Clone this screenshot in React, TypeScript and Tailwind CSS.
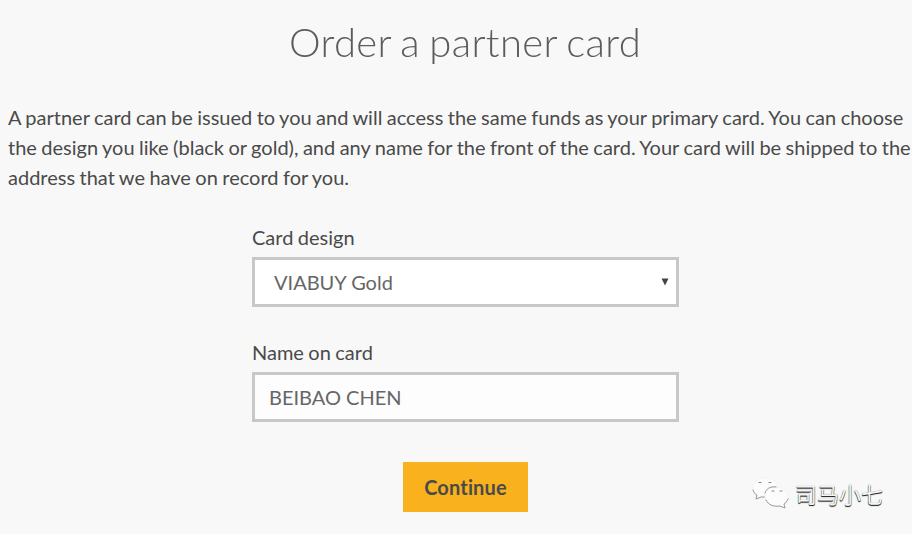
import { useState } from "react";

export default function App() {
  const [design, setDesign] = useState("gold");
  const [name, setName] = useState("BEIBAO CHEN");

  return (
    <div className="relative h-[534px] w-[912px] overflow-hidden bg-[#f8f8f8] pl-2 font-['Lato',sans-serif] text-[20px] leading-[30px] text-[#4a4a4a] [font-variant-ligatures:none] [word-spacing:-0.68px]">
      <h1 className="w-[914px] pt-[17px] text-center text-[40px] font-extralight leading-[50px] tracking-[0.35px] text-[#5c5c5c] will-change-transform [font-family:'Lato_Light','Lato',sans-serif] [word-spacing:-2px]">
        Order a partner card
      </h1>

      <p className="mt-[35px] w-[908px]">
        A partner card can be issued to you and will access the same funds as your primary card. You can choose
        the design you like (black or gold), and any name for the front of the card. Your card will be shipped to the
        address that we have on record for you.
      </p>

      <form
        className="ml-[244px] mt-[30px] flex w-[427px] flex-col"
        onSubmit={(event) => event.preventDefault()}
      >
        <label htmlFor="design">Card design</label>
        <div className="relative mt-[5px]">
          <select
            id="design"
            className="block h-[50px] w-full appearance-none border-[3px] border-[#c8c8c8] bg-white px-[19px] text-[#666] outline-none"
            value={design}
            onChange={(event) => setDesign(event.target.value)}
          >
            <option value="gold">VIABUY Gold</option>
            <option value="black">VIABUY Black</option>
          </select>
          <SelectArrow />
        </div>

        <label htmlFor="name" className="mt-[30px]">
          Name on card
        </label>
        <input
          id="name"
          type="text"
          className="mt-[5px] h-[50px] w-full border-[3px] border-[#c8c8c8] bg-[#fdfdfd] px-[14px] text-[#666] outline-none"
          value={name}
          onChange={(event) => setName(event.target.value)}
        />

        <button
          type="submit"
          className="mt-[40px] h-[50px] w-[125px] self-center bg-[#f9b21d] font-bold tracking-[0.15px] text-[#4a4a4a]"
        >
          Continue
        </button>
      </form>

      <Watermark />
    </div>
  );
}

function SelectArrow() {
  return (
    <svg
      className="pointer-events-none absolute right-[10px] top-[21px] h-[8px] w-[8px]"
      viewBox="0 0 8 8"
      fill="#444"
    >
      <path d="M0.5 0.5h7L4 7.5z" />
    </svg>
  );
}

function Watermark() {
  return (
    <div className="absolute left-[751px] top-[473px] flex items-center">
      <svg className="mt-[3px] h-[36px] w-[40px]" viewBox="0 0 40 36" fill="none" strokeLinecap="round">
        <path
          d="M2 12c0-6 5-10 12-10s12 3 13 8c-8 0-14 4-14 11l-3 0-5 3 1-5c-3-2-4-4-4-7z"
          fill="#fcfcfc"
          stroke="#efefef"
          strokeWidth="0.7"
        />
        <path d="M2 14c1 3 2 4 4 5l-1 4 5-2h4" stroke="#999" strokeWidth="1" />
        <path
          d="M14 20c0-6 5-9 11-9s12 4 12 10c0 3-2 5-4 7l1 4-5-2c-8 2-15-3-15-10z"
          fill="#fcfcfc"
          stroke="#efefef"
          strokeWidth="0.7"
        />
        <path d="M14 17c1-4 5-7 11-6M15 24c2 5 8 7 14 6l5 2-1-4c2-1 3-3 4-5" stroke="#999" strokeWidth="1" />
        <path d="M8 6.500h2M18 6.500h2M21 15h2M29 15h2" stroke="#888" strokeWidth="1.200" />
      </svg>
      <span className="ml-[4px] font-['Noto_Sans_CJK_SC',sans-serif] text-[22px] leading-[30px] text-[#f4f4f4] [text-shadow:0_1px_1px_#222,0_1px_0_#777,0_0_1px_#888]">
        司马小七
      </span>
    </div>
  );
}
